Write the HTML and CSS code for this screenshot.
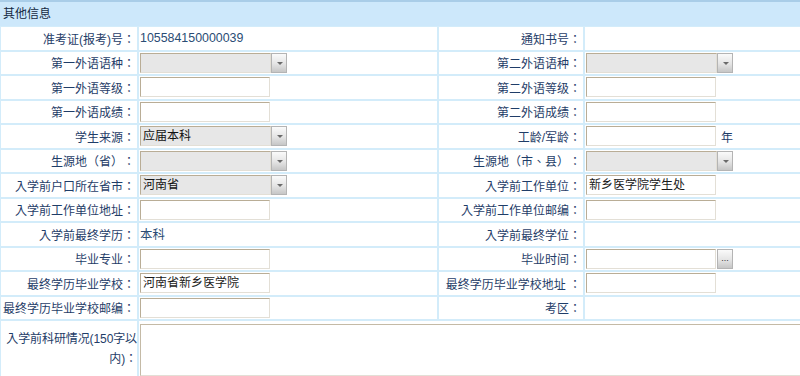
FILE: index.html
```html
<!DOCTYPE html>
<html lang="zh-TW">
<head>
<meta charset="utf-8">
<link rel="stylesheet" href="styles.css">
</head>
<body>
<div class="panel">
  <div class="head">其他信息</div>
  <table class="form">
    <colgroup><col class="c1"><col class="c2"><col class="c3"><col class="c4"></colgroup>
    <tr>
      <td class="lbl">准考证(报考)号：</td><td class="val"><span class="txt">105584150000039</span></td>
      <td class="lbl">通知书号：</td><td class="val"></td>
    </tr>
    <tr>
      <td class="lbl">第一外语语种：</td><td class="val"><span class="sel"><span class="box"></span><span class="btn"></span></span></td>
      <td class="lbl">第二外语语种：</td><td class="val"><span class="sel"><span class="box"></span><span class="btn"></span></span></td>
    </tr>
    <tr>
      <td class="lbl">第一外语等级：</td><td class="val"><span class="inp"></span></td>
      <td class="lbl">第二外语等级：</td><td class="val"><span class="inp"></span></td>
    </tr>
    <tr>
      <td class="lbl">第一外语成绩：</td><td class="val"><span class="inp"></span></td>
      <td class="lbl">第二外语成绩：</td><td class="val"><span class="inp"></span></td>
    </tr>
    <tr>
      <td class="lbl">学生来源：</td><td class="val"><span class="sel"><span class="box">应届本科</span><span class="btn"></span></span></td>
      <td class="lbl">工龄/军龄：</td><td class="val"><span class="inp"></span><span class="unit">年</span></td>
    </tr>
    <tr>
      <td class="lbl">生源地（省）：</td><td class="val"><span class="sel"><span class="box"></span><span class="btn"></span></span></td>
      <td class="lbl">生源地（市、县）：</td><td class="val"><span class="sel"><span class="box"></span><span class="btn"></span></span></td>
    </tr>
    <tr>
      <td class="lbl">入学前户口所在省市：</td><td class="val"><span class="sel"><span class="box">河南省</span><span class="btn"></span></span></td>
      <td class="lbl">入学前工作单位：</td><td class="val"><span class="inp">新乡医学院学生处</span></td>
    </tr>
    <tr>
      <td class="lbl">入学前工作单位地址：</td><td class="val"><span class="inp"></span></td>
      <td class="lbl">入学前工作单位邮编：</td><td class="val"><span class="inp"></span></td>
    </tr>
    <tr>
      <td class="lbl">入学前最终学历：</td><td class="val"><span class="txt">本科</span></td>
      <td class="lbl">入学前最终学位：</td><td class="val"></td>
    </tr>
    <tr>
      <td class="lbl">毕业专业：</td><td class="val"><span class="inp"></span></td>
      <td class="lbl">毕业时间：</td><td class="val"><span class="inp"></span><span class="dots">...</span></td>
    </tr>
    <tr>
      <td class="lbl">最终学历毕业学校：</td><td class="val"><span class="inp">河南省新乡医学院</span></td>
      <td class="lbl">最终学历毕业学校地址 ：</td><td class="val"><span class="inp"></span></td>
    </tr>
    <tr>
      <td class="lbl">最终学历毕业学校邮编：</td><td class="val"><span class="inp"></span></td>
      <td class="lbl">考区：</td><td class="val"></td>
    </tr>
    <tr class="tall">
      <td class="lbl wrap">入学前科研情况(150字以内)：</td>
      <td class="val" colspan="3"><span class="area"></span></td>
    </tr>
  </table>
</div>
</body>
</html>
```

FILE: styles.css
```css
html, body {
  margin: 0;
  padding: 0;
  background: #ffffff;
  overflow: hidden;
}
body {
  font-family: "Liberation Sans", "Noto Sans CJK TC", sans-serif;
  font-size: 12px;
  color: #1f3d68;
  text-spacing-trim: space-all;
}
.panel {
  width: 806px;
}
.head {
  height: 24px;
  line-height: 24px;
  border-top: 2px solid #a9cde8;
  background: #cde8fb;
  color: #14283f;
  padding-left: 3px;
  font-size: 12px;
}
.form {
  border-collapse: separate;
  border-spacing: 0;
  table-layout: fixed;
  width: 806px;
}
.c1 { width: 138px; }
.c2 { width: 300px; }
.c3 { width: 146px; }
.c4 { width: 222px; }
.form td {
  border: 1px solid #d3ecfa;
  height: 22.5px;
  padding: 0;
  vertical-align: middle;
  white-space: nowrap;
}
.lbl {
  text-align: right;
  padding-right: 2px !important;
  color: #1f3d68;
}
.val {
  padding-left: 1px !important;
  text-align: left;
}
.txt {
  color: #2a4c74;
  font-size: 12.4px;
}
.inp {
  display: inline-block;
  vertical-align: middle;
  box-sizing: border-box;
  width: 130px;
  height: 20px;
  border: 1px solid;
  border-color: #b9ad96 #e3dfd6 #e3dfd6 #b9ad96;
  background: #fff;
  color: #1a1a1a;
  line-height: 18px;
  padding-left: 2px;
}
.sel {
  display: inline-flex;
  vertical-align: middle;
  height: 20px;
}
.sel .box {
  box-sizing: border-box;
  width: 131px;
  height: 20px;
  border: 1px solid;
  border-color: #b9ad96 #e3dfd6 #e3dfd6 #b9ad96;
  background: #e7e7e7;
  color: #111;
  line-height: 18px;
  padding-left: 2px;
}
.btn, .dots {
  box-sizing: border-box;
  width: 16px;
  height: 20px;
  border: 1px solid #b4b4b4;
  background: linear-gradient(#fafafa, #e4e4e4 55%, #c6c6c6);
  position: relative;
}
.btn::after {
  content: "";
  position: absolute;
  left: 5px;
  top: 8px;
  border-left: 3px solid transparent;
  border-right: 3px solid transparent;
  border-top: 3px solid #6a6a6a;
}
.dots {
  display: inline-block;
  vertical-align: middle;
  margin-left: 1px;
  font-size: 9px;
  line-height: 16px;
  text-align: center;
  color: #333;
}
.unit {
  margin-left: 5px;
  vertical-align: middle;
  color: #1f3d68;
}
.tall td {
  height: 56px;
}
.form .wrap {
  white-space: normal;
  line-height: 20px;
  padding: 0 !important;
  word-break: break-all;
  letter-spacing: -0.1px;
}
.area {
  display: block;
  box-sizing: border-box;
  width: 700px;
  height: 52px;
  margin-top: 2px;
  border: 1px solid;
  border-color: #c4baa6 #e3dfd6 #e3dfd6 #c4baa6;
  background: #fff;
}
```
